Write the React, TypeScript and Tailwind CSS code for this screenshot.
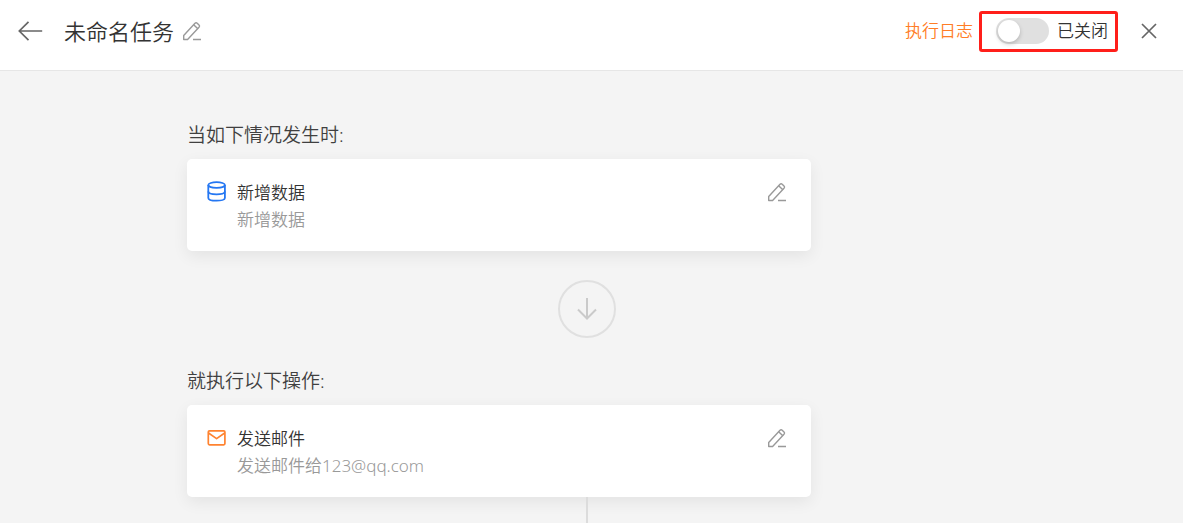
import { ReactNode, useState } from "react";

function PencilIcon() {
  return (
    <svg
      width="20"
      height="20"
      viewBox="0 0 20 20"
      fill="none"
      stroke="currentColor"
      strokeWidth="1.4"
      strokeLinejoin="round"
      aria-hidden="true"
    >
      <path d="M1.7 18.5v-4.1L13 2.3q1.1-1 2.2 0l1.8 1.8q1.1 1.1 0 2.2L5.6 18.5z" />
      <path d="M11.7 3.7l4.1 4.1M11 18.5h8" />
    </svg>
  );
}

function DatabaseIcon() {
  return (
    <svg
      width="20"
      height="22"
      viewBox="0 0 20 22"
      fill="none"
      stroke="currentColor"
      strokeWidth="1.8"
      aria-hidden="true"
    >
      <ellipse cx="9.6" cy="4" rx="8.3" ry="2.8" />
      <path d="M1.3 4v12.9c0 1.7 3.7 2.8 8.3 2.8s8.3-1.1 8.3-2.8V4" />
      <path d="M1.3 10.6c0 1.7 3.7 2.8 8.3 2.8s8.3-1.1 8.3-2.8" />
    </svg>
  );
}

function MailIcon() {
  return (
    <svg
      width="20"
      height="22"
      viewBox="0 0 20 22"
      fill="none"
      stroke="currentColor"
      strokeWidth="1.7"
      strokeLinejoin="round"
      aria-hidden="true"
    >
      <rect x="1.3" y="3.8" width="16.6" height="14" rx="1.2" />
      <path d="M1.5 6l8.1 5.6L17.7 6" />
    </svg>
  );
}

type StepProps = {
  heading: string;
  icon: ReactNode;
  title: string;
  detail: string;
};

function Step({ heading, icon, title, detail }: StepProps) {
  return (
    <section className="w-[78%]">
      <h2 className="mb-[10px] text-[19px] leading-7 text-[#404040]">
        {heading}
      </h2>
      <div className="flex items-start rounded-[5px] bg-white px-5 pt-5 pb-[18px] shadow-[0_5px_16px_rgba(0,0,0,0.07)]">
        <span className="mt-[2px] mr-[10px]">{icon}</span>
        <div className="min-w-0 flex-1 text-[17px] leading-[27px]">
          <h3 className="text-[#333]">{title}</h3>
          <p className="text-[#999]">{detail}</p>
        </div>
        <button aria-label="编辑" className="mt-[3px] mr-1 text-[#999]">
          <PencilIcon />
        </button>
      </div>
    </section>
  );
}

export default function App() {
  const [enabled, setEnabled] = useState(false);

  return (
    <div className="flex min-h-screen flex-col bg-[#f4f4f4] font-['Noto_Sans','Noto_Sans_CJK_SC',sans-serif] font-[350]">
      <header className="flex h-[71px] items-center border-b border-[#e6e6e6] bg-white pr-[25px] pb-2 pl-[18px]">
        <button aria-label="返回" className="mr-[21px] text-[#666]">
          <svg
            width="25"
            height="20"
            viewBox="0 0 25 20"
            fill="none"
            stroke="currentColor"
            strokeWidth="1.7"
            aria-hidden="true"
          >
            <path d="M10.5 .8L1.3 10l9.2 9.2M1.3 10H24.2" />
          </svg>
        </button>
        <h1 className="text-[22px] leading-8 text-[#333]">未命名任务</h1>
        <button aria-label="重命名" className="ml-2 text-[#999]">
          <PencilIcon />
        </button>

        <a href="#log" className="ml-auto text-[17px] text-[#ff7d26]">
          执行日志
        </a>
        <label className="ml-[6px] flex h-[41px] items-center rounded-[3px] border-3 border-[#ff1f1a] pr-[7px] pl-[14px] text-[17px] text-[#333]">
          <input
            type="checkbox"
            role="switch"
            checked={enabled}
            onChange={(e) => setEnabled(e.target.checked)}
            className="mr-2 h-[26px] w-[53px] appearance-none rounded-full bg-[#e0e0e0] p-[2px] before:block before:size-[22px] before:rounded-full before:bg-white before:shadow-[0_2px_4px_rgba(0,0,0,0.2)] checked:bg-[#ff8330] checked:before:ml-auto"
          />
          {enabled ? "已开启" : "已关闭"}
        </label>
        <button aria-label="关闭" className="ml-[22px] text-[#666]">
          <svg
            width="18"
            height="18"
            viewBox="0 0 18 18"
            fill="none"
            stroke="currentColor"
            strokeWidth="1.7"
            aria-hidden="true"
          >
            <path d="M2 2l14 14M16 2L2 16" />
          </svg>
        </button>
      </header>

      <main className="flex flex-1 flex-col pt-[50px] pr-[9px]">
        <div className="mx-auto flex w-full max-w-[800px] flex-1 flex-col">
          <Step
            heading="当如下情况发生时:"
            icon={
              <span className="text-[#2577f2]">
                <DatabaseIcon />
              </span>
            }
            title="新增数据"
            detail="新增数据"
          />
          <div className="my-[29px] flex size-[58px] items-center justify-center self-center rounded-full border-2 border-[#e0e0e0] text-[#cacaca]">
            <svg
              width="20"
              height="24"
              viewBox="0 0 20 24"
              fill="none"
              stroke="currentColor"
              strokeWidth="2"
              aria-hidden="true"
            >
              <path d="M10 1v20M1 12.5l9 9 9-9" />
            </svg>
          </div>
          <Step
            heading="就执行以下操作:"
            icon={
              <span className="text-[#ff8330]">
                <MailIcon />
              </span>
            }
            title="发送邮件"
            detail="发送邮件给123@qq.com"
          />
          <div className="min-h-6 w-[2px] flex-1 self-center bg-[#dcdcdc]" />
        </div>
      </main>
    </div>
  );
}
